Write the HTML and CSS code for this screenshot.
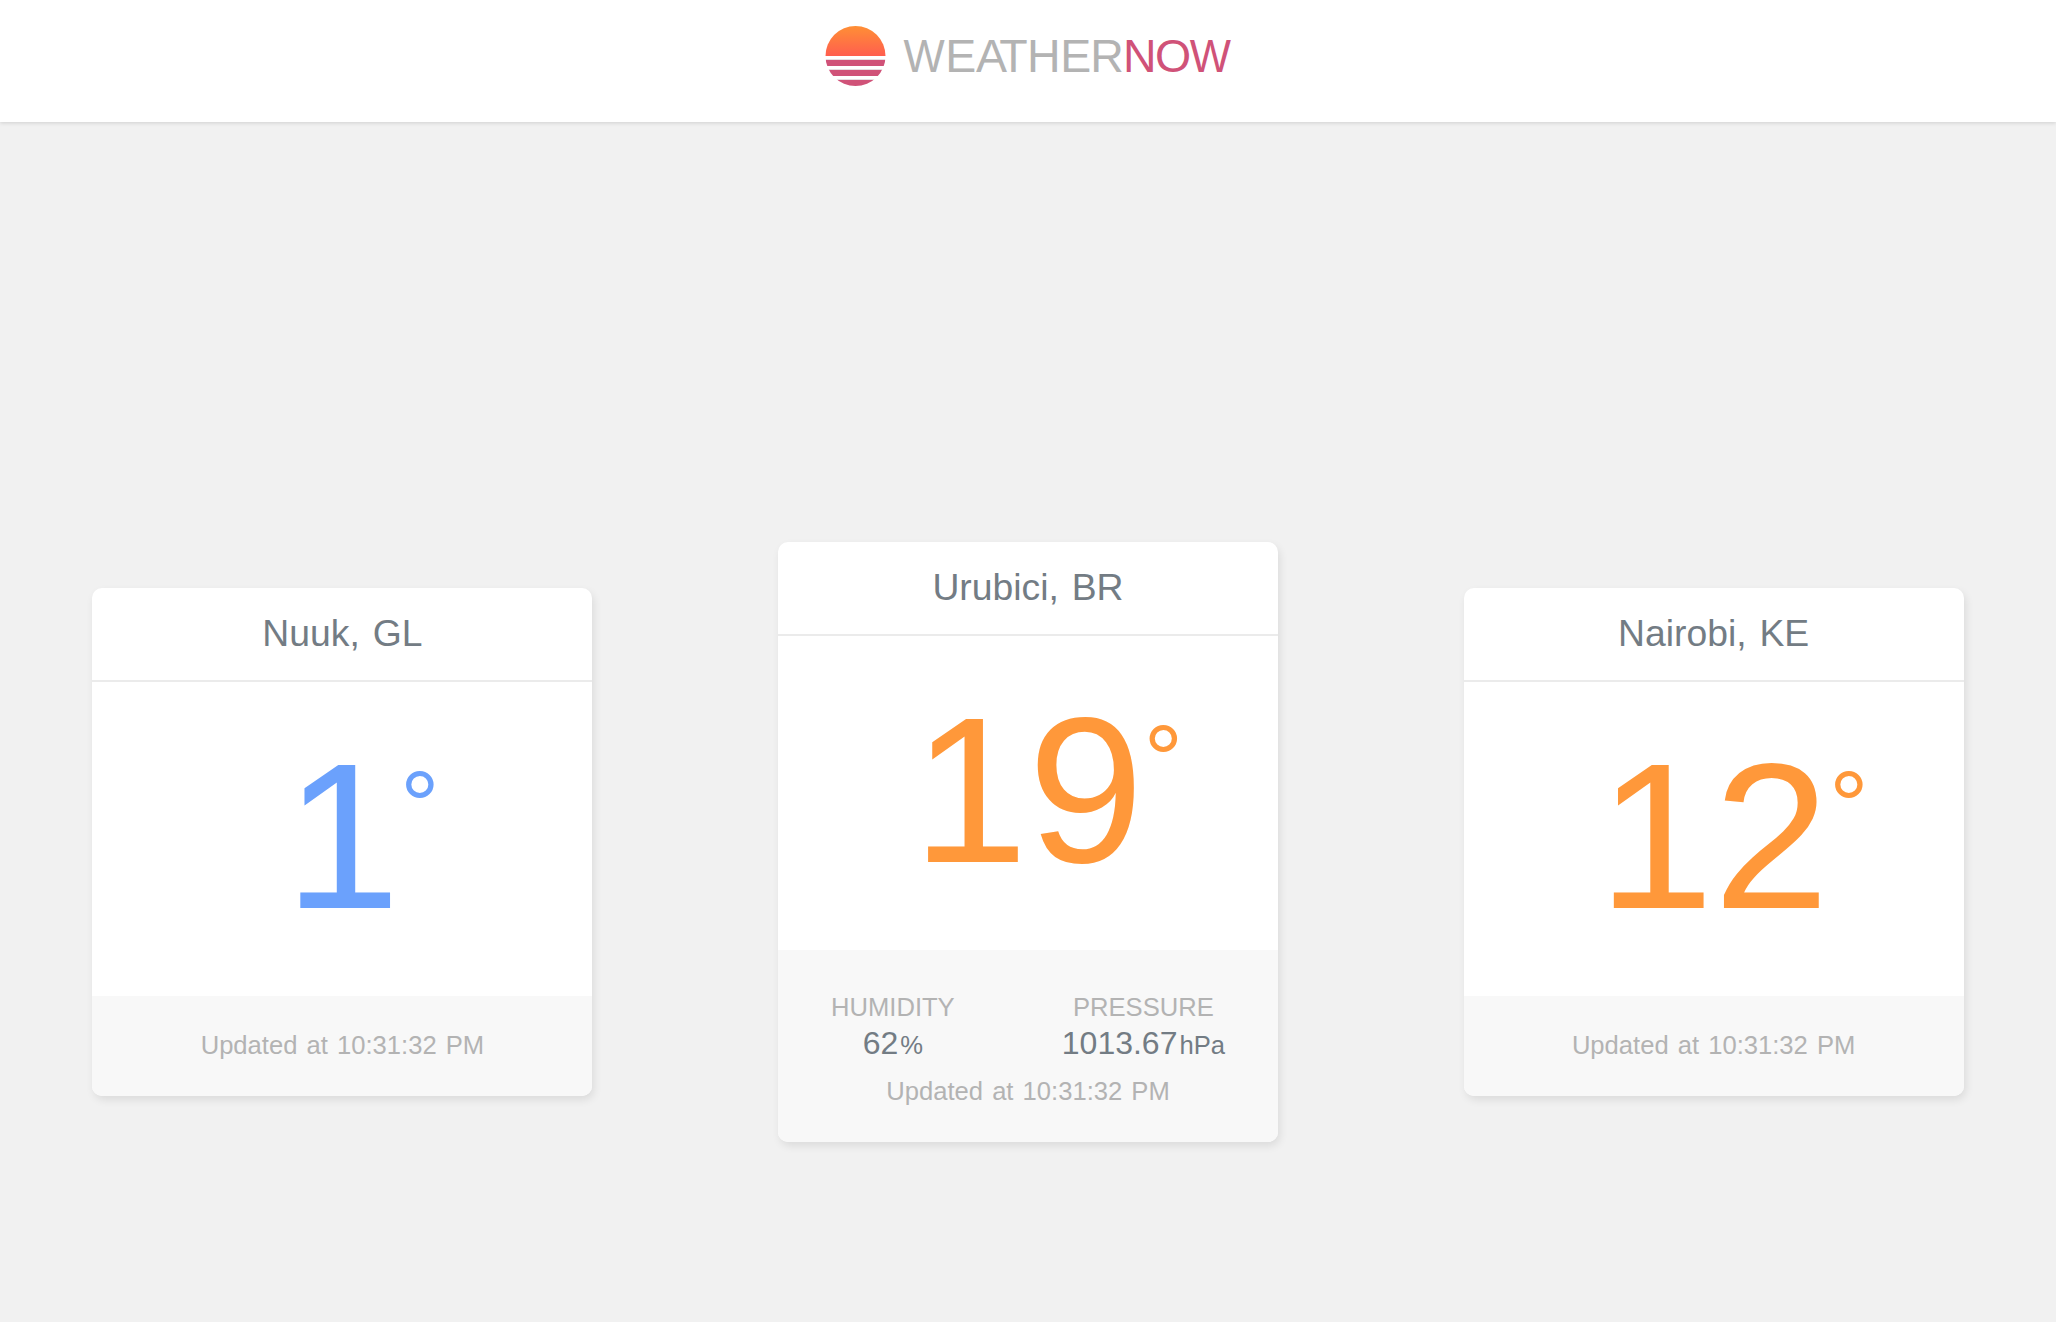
FILE: index.html
```html
<!DOCTYPE html>
<html lang="en">
<head>
<meta charset="utf-8">
<title>Weather Now</title>
<link rel="stylesheet" href="styles.css">
</head>
<body>
<header class="header">
  <svg class="logo" width="406" height="60" viewBox="0 0 406 60" role="img" aria-label="WeatherNow">
    <defs>
      <linearGradient id="sun" x1="0" y1="0" x2="0" y2="1">
        <stop offset="0" stop-color="#ff8f35"/>
        <stop offset="1" stop-color="#ff5e4f"/>
      </linearGradient>
      <clipPath id="disc"><circle cx="30.5" cy="30" r="30"/></clipPath>
    </defs>
    <g clip-path="url(#disc)">
      <rect width="61" height="30" fill="url(#sun)"/>
      <g fill="#e6dce0">
        <rect y="33" width="61" height="1"/>
        <rect y="43" width="61" height="1"/>
        <rect y="53" width="61" height="1"/>
      </g>
      <g fill="#d05278">
        <rect y="34" width="61" height="6"/>
        <rect y="44" width="61" height="6"/>
        <rect y="54" width="61" height="6"/>
      </g>
    </g>
    <text class="logo-weather" y="46.3" x="78.5" textLength="41.2" lengthAdjust="spacingAndGlyphs">W</text>
    <text class="logo-weather" y="46.3" x="120.2 151 174.3 202 235.2 265.2">EATHER</text>
    <text class="logo-now" y="46.3" x="297.9 330.1">NO</text>
    <text class="logo-now" y="46.3" x="364.7" textLength="41.2" lengthAdjust="spacingAndGlyphs">W</text>
  </svg>
</header>
<main class="cities">
  <article class="card">
    <h2 class="card-title">Nuuk, GL</h2>
    <div class="card-body"><span class="temp temp-cold">1<span class="degree">°</span></span></div>
    <footer class="card-footer"><p class="updated">Updated at 10:31:32 PM</p></footer>
  </article>
  <article class="card">
    <h2 class="card-title">Urubici, BR</h2>
    <div class="card-body"><span class="temp temp-warm">19<span class="degree">°</span></span></div>
    <footer class="card-footer">
      <dl class="stats">
        <div class="stat"><dt>HUMIDITY</dt><dd>62<span class="unit">%</span></dd></div>
        <div class="stat"><dt>PRESSURE</dt><dd>1013.67<span class="unit">hPa</span></dd></div>
      </dl>
      <p class="updated">Updated at 10:31:32 PM</p>
    </footer>
  </article>
  <article class="card">
    <h2 class="card-title">Nairobi, KE</h2>
    <div class="card-body"><span class="temp temp-warm">12<span class="degree">°</span></span></div>
    <footer class="card-footer"><p class="updated">Updated at 10:31:32 PM</p></footer>
  </article>
</main>
</body>
</html>
```
FILE: styles.css
```css
* { box-sizing: border-box; margin: 0; padding: 0; }

body {
  display: flex;
  flex-direction: column;
  height: 100vh;
  background: #f1f1f1;
  color: #737c84;
  font-family: "Liberation Sans", Arial, sans-serif;
}

.header {
  display: flex;
  justify-content: center;
  height: 122px;
  padding-top: 26px;
  background: #fff;
  box-shadow: 0 1px 4px rgba(0, 0, 0, 0.14);
}

.logo { display: block; overflow: visible; }
.logo text { font-size: 46.5px; }
.logo-weather { fill: #b3b3b3; }
.logo-now { fill: #d05278; }

.cities {
  display: flex;
  flex: 1;
  align-items: center;
  justify-content: space-between;
  padding: 240px 92.4px 0;
}

.card {
  width: 500px;
  border-radius: 10px;
  background: #fff;
  box-shadow: 2px 4px 8px rgba(0, 0, 0, 0.09);
  overflow: hidden;
}

.card-title {
  height: 94px;
  border-bottom: 2px solid #ebebeb;
  font-size: 37.3px;
  font-weight: 400;
  line-height: 90px;
  text-align: center;
  word-spacing: 2.5px;
}

.card-body {
  display: flex;
  align-items: center;
  justify-content: center;
  height: 314px;
  padding-bottom: 6px;
}

.temp {
  position: relative;
  font-size: 208px;
  line-height: 1;
}
.temp-cold { color: #6ba1fc; }
.temp-warm { color: #ff983a; }

.degree {
  position: absolute;
  top: 24px;
  left: 100%;
  font-size: 98px;
  line-height: 1;
}

.card-footer {
  padding: 34px 30px 36px;
  background: #f8f8f8;
  color: #b3b3b3;
  font-size: 25.6px;
  line-height: 30px;
  text-align: center;
}

.updated { word-spacing: 2px; }

.stats {
  display: flex;
  justify-content: space-between;
  padding: 8px 23px 12px;
}
.stat { display: flex; flex-direction: column; align-items: center; }
.stat dd { color: #737c84; font-size: 32px; line-height: 42px; }
.unit { margin-left: 2px; font-size: 25.6px; line-height: 1; }
```
